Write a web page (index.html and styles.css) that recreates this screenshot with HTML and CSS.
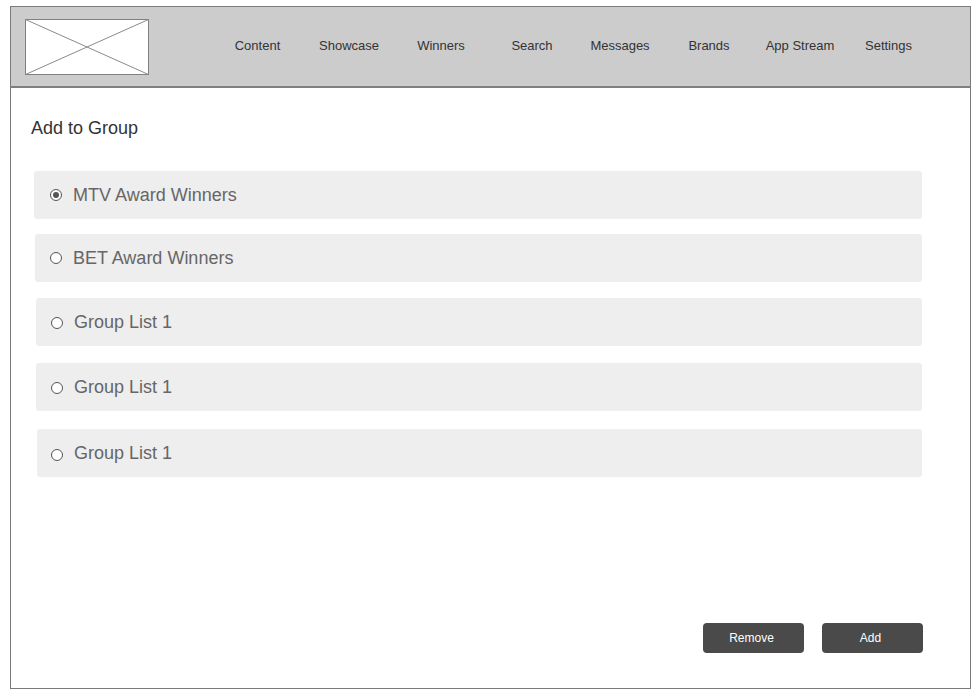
FILE: index.html
```html
<!DOCTYPE html>
<html>
<head>
<meta charset="utf-8">
<link rel="stylesheet" href="styles.css">
</head>
<body>
<div class="frame">
  <header class="header">
    <div class="logo">
      <svg width="124" height="56" viewBox="0 0 124 56" preserveAspectRatio="none">
        <rect x="0.5" y="0.5" width="123" height="55" fill="#fff" stroke="#808080" stroke-width="1"/>
        <line x1="0.5" y1="0.5" x2="123.5" y2="55.5" stroke="#8a8a8a" stroke-width="1"/>
        <line x1="123.5" y1="0.5" x2="0.5" y2="55.5" stroke="#8a8a8a" stroke-width="1"/>
      </svg>
    </div>
    <nav class="nav">
      <span class="nav-item">Content</span>
      <span class="nav-item">Showcase</span>
      <span class="nav-item">Winners</span>
      <span class="nav-item">Search</span>
      <span class="nav-item">Messages</span>
      <span class="nav-item">Brands</span>
      <span class="nav-item">App Stream</span>
      <span class="nav-item">Settings</span>
    </nav>
  </header>
  <main class="main">
    <h1 class="title">Add to Group</h1>
    <ul class="list">
      <li class="row r1"><span class="radio checked"></span><span class="label">MTV Award Winners</span></li>
      <li class="row r2"><span class="radio"></span><span class="label">BET Award Winners</span></li>
      <li class="row r3"><span class="radio low"></span><span class="label">Group List 1</span></li>
      <li class="row r4"><span class="radio low"></span><span class="label">Group List 1</span></li>
      <li class="row r5"><span class="radio lower"></span><span class="label">Group List 1</span></li>
    </ul>
    <div class="actions">
      <button class="btn">Remove</button>
      <button class="btn">Add</button>
    </div>
  </main>
</div>
</body>
</html>
```

FILE: styles.css
```css
* { box-sizing: border-box; }
html, body { margin: 0; padding: 0; background: #fff; }
body { font-family: "Liberation Sans", Arial, sans-serif; }

.frame {
  margin: 6px 0 0 10px;
  width: 961px;
  height: 683px;
  border: 1px solid #7a7a7a;
  display: flex;
  flex-direction: column;
}

.header {
  height: 81px;
  background: #cccccc;
  border-bottom: 2px solid #7f7f7f;
  display: flex;
  align-items: center;
  padding-left: 14px;
  flex: none;
}

.logo { width: 124px; height: 56px; display: flex; }
.logo svg { display: block; }

.nav {
  margin-left: 63px;
  display: grid;
  grid-template-columns: 91px 92px 92px 90px 86px 92px 90px 87px;
  padding-bottom: 3px;
}
.nav-item {
  text-align: center;
  font-size: 13px;
  color: #333;
  white-space: nowrap;
}

.main {
  flex: 1;
  display: flex;
  flex-direction: column;
  padding: 30px 47px 35px 20px;
}

.title {
  margin: 0;
  font-size: 18px;
  font-weight: normal;
  line-height: 20px;
  color: #333;
}

.list {
  list-style: none;
  margin: 33px 1px 0 3px;
  padding: 0;
  display: flex;
  flex-direction: column;
}

.row {
  height: 48px;
  background: #eeeeee;
  border-radius: 3px;
  display: flex;
  align-items: center;
  padding-left: 16px;
}
.r2 { margin-left: 1px; margin-top: 15px; }
.r3 { margin-left: 2px; margin-top: 16px; }
.r4 { margin-left: 2px; margin-top: 17px; }
.r5 { margin-left: 3px; margin-top: 18px; }
.r2, .r3, .r4 { padding-left: 15px; }
.r5 { padding-left: 14px; }

.radio {
  width: 12px;
  height: 12px;
  border: 1px solid #555;
  border-radius: 50%;
  background: #fff;
  flex: none;
  position: relative;
}
.radio.low { margin-top: 2px; }
.radio.lower { margin-top: 4px; }
.radio.checked::after {
  content: "";
  position: absolute;
  left: 2px; top: 2px;
  width: 6px; height: 6px;
  border-radius: 50%;
  background: #555;
}

.label {
  margin-left: 11px;
  font-size: 18px;
  color: #666;
}

.actions {
  margin-top: auto;
  display: flex;
  justify-content: flex-end;
  gap: 18px;
}
.btn {
  width: 101px;
  height: 30px;
  background: #494a49;
  border: none;
  border-radius: 4px;
  color: #fff;
  font-family: "Liberation Sans", Arial, sans-serif;
  font-size: 12px;
  padding: 0 4px 0 0;
}
```
